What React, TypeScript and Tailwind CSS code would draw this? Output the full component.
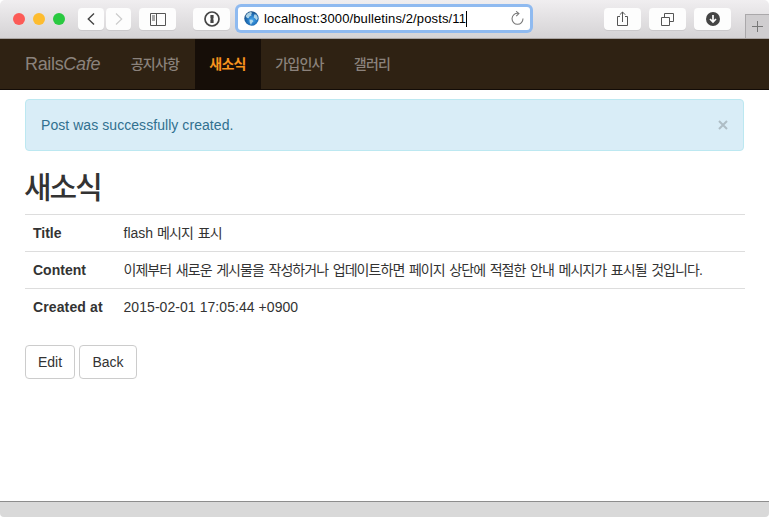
import type { ReactNode } from "react";

const navItems = [
  { label: "공지사항", active: false, width: "w-[79px]" },
  { label: "새소식", active: true, width: "w-[66px]" },
  { label: "가입인사", active: false, width: "w-[78px]" },
  { label: "갤러리", active: false, width: "w-[67px]" },
];

function ToolButton({ className, children }: { className: string; children: ReactNode }) {
  return (
    <button className={`flex h-[22px] items-center justify-center rounded-[4px] bg-[#fdfdfd] shadow-[0_1px_0_#cbc9cb] ${className}`}>
      {children}
    </button>
  );
}

function Globe() {
  return (
    <svg width="15" height="15" viewBox="0 0 15 15">
      <defs>
        <radialGradient id="sea" cx="0.55" cy="0.6" r="0.6">
          <stop offset="0" stopColor="#4aaaf0" />
          <stop offset="0.6" stopColor="#2273bd" />
          <stop offset="1" stopColor="#1a4c80" />
        </radialGradient>
      </defs>
      <circle cx="7.5" cy="7.5" r="7.2" fill="url(#sea)" />
      <path d="M1.5 5 3.6 2.2 6.5 1l1.7.8-1 1.4.3 1.4-2 1L4.6 7.2 3 7zM5.4 8.4l2.8.4 1.2 1.5-1.6 1.6-.8 2-1.2-2.2zM10.2 3.4l2 .2 1.3 2.2.2 2-1.2 1.5-1.3-1.8-1.5-.9z" fill="#c5e4ef" opacity=".85" />
    </svg>
  );
}

function Toolbar() {
  return (
    <header className="relative flex h-[39px] items-start rounded-t-[5px] border-b border-[#aaa5a3] bg-gradient-to-b from-[#f0eef0] to-[#d5d3d5] pt-2 pl-[13px]">
      <div className="mt-[5px] flex gap-2">
        <span className="size-3 rounded-full bg-[#fc5b57]" />
        <span className="size-3 rounded-full bg-[#fdbc2f]" />
        <span className="size-3 rounded-full bg-[#29c940]" />
      </div>
      <div className="ml-[13px] flex gap-[2px]">
        <ToolButton className="w-[26px]">
          <svg width="10" height="14" viewBox="0 0 10 14" fill="none" stroke="#444" strokeWidth="1.4"><path d="M8 1.5 2.3 7 8 12.5" /></svg>
        </ToolButton>
        <ToolButton className="w-[25px]">
          <svg width="10" height="14" viewBox="0 0 10 14" fill="none" stroke="#ccc" strokeWidth="1.2"><path d="m2 1.5 5.7 5.5L2 12.5" /></svg>
        </ToolButton>
      </div>
      <ToolButton className="ml-2 w-[37px]">
        <svg width="16" height="13" viewBox="0 0 16 13" fill="none" stroke="#555" strokeWidth="1"><path d="M.5.5h15v12H.5zM6.5.5v12M2 3h3M2 5h3M2 7h3" /></svg>
      </ToolButton>
      <ToolButton className="ml-[17px] w-[37px]">
        <svg width="16" height="16" viewBox="0 0 16 16"><circle cx="8" cy="8" r="7" fill="none" stroke="#454545" strokeWidth="1.7" /><path d="M6.4 4h3.2v3.2L9 8l.6.7V12H6.4V8.8L7 8l-.6-.8z" fill="#454545" /></svg>
      </ToolButton>
      <div className="-mt-px ml-[8px] flex h-[23px] w-[292px] items-center rounded-[3px] bg-white pl-[6px] shadow-[0_0_0_3px_#8fbaf0]">
        <Globe />
        <span className="ml-[5px] w-[202px] pt-px text-[13px] leading-5 tracking-[0.12px] whitespace-nowrap text-black">localhost:3000/bulletins/2/posts/11</span>
        <span className="h-4 w-px bg-black" />
        <svg className="mr-[5px] ml-auto" width="15" height="15" viewBox="0 0 14 14" fill="none" stroke="#777"><path d="M7.5 2.2A5.1 5.1 0 1 0 12.1 7M5.7.3 8.3 2.4 5.8 4.7" /></svg>
      </div>
      <ToolButton className="ml-[74px] w-[37px]">
        <svg width="13" height="16" viewBox="0 0 13 16" fill="none" stroke="#555"><path d="M4 5.5H1.5v9h10v-9H9M6.5 11V1M3.8 3.7 6.5 1l2.7 2.7" /></svg>
      </ToolButton>
      <ToolButton className="ml-2 w-[37px]">
        <svg width="13" height="13" viewBox="0 0 13 13" fill="none" stroke="#555"><path d="M.5 4.5h8v8h-8zM3.5 4V.5h9v8H9" /></svg>
      </ToolButton>
      <ToolButton className="ml-2 w-[37px]">
        <svg width="14" height="14" viewBox="0 0 14 14"><circle cx="7" cy="7" r="7" fill="#454545" /><path d="M7 3v7M4 7l3 3 3-3" fill="none" stroke="white" strokeWidth="1.7" /></svg>
      </ToolButton>
      <div className="mt-[6px] ml-[14px] flex h-[24px] w-6 items-center justify-center border-t border-l border-[#aaa8aa] bg-[#cfcdcf]">
        <svg width="11" height="11" viewBox="0 0 11 11" stroke="#777"><path d="M0 5.5h11M5.5 0v11" /></svg>
      </div>
    </header>
  );
}

export default function App() {
  return (
    <div className="flex h-[517px] w-[769px] flex-col overflow-hidden bg-white font-['Liberation_Sans','Noto_Sans_CJK_KR',sans-serif] text-[14px] leading-5 text-[#333]">
      <Toolbar />
      <nav className="flex h-[51px] shrink-0 border-b border-[#130c07] bg-[#2f2213] pl-[25px] text-[#8b827c]">
        <a className="w-[91px] pt-[15px] text-[18px] leading-5 tracking-[-0.33px]">Rails<em>Cafe</em></a>
        {navItems.map((item) => (
          <a
            key={item.label}
            className={`flex shrink-0 justify-center pt-[15px] pr-px tracking-[-0.75px] ${item.width} ${item.active ? "bg-[#160e08] font-bold text-[#f7931e]" : "font-medium"}`}
          >
            {item.label}
          </a>
        ))}
      </nav>
      <main className="flex-1 pt-[9px] pr-6 pl-[25px]">
        <div className="flex h-[52px] w-[719px] items-center justify-between rounded-[4px] border border-[#bce8f1] bg-[#d9edf7] pr-[14px] pl-[15px] text-[#31708f]">
          <span className="tracking-[0.06px]">Post was successfully created.</span>
          <svg width="12" height="12" viewBox="0 0 12 12" stroke="#aebdc5" strokeWidth="2"><path d="m2 2 8 8M10 2l-8 8" /></svg>
        </div>
        <h1 className="-ml-px mt-[20px] h-[43px] text-[30px] leading-[33px] font-medium tracking-[-2px]">새소식</h1>
        <table className="w-[720px] table-fixed border-collapse text-left">
          <colgroup>
            <col className="w-[91px]" />
            <col />
          </colgroup>
          <tbody>
            <tr className="h-[37px] border-t border-[#ddd]">
              <th className="pl-2">Title</th>
              <td className="pl-[7.5px]">flash <span className="tracking-[-0.9px] [word-spacing:1.8px]">메시지 표시</span></td>
            </tr>
            <tr className="h-[37px] border-t border-[#ddd]">
              <th className="pl-2">Content</th>
              <td className="pl-[7.5px] tracking-[-0.95px] whitespace-nowrap [word-spacing:1.65px]">이제부터 새로운 게시물을 작성하거나 업데이트하면 페이지 상단에 적절한 안내 메시지가 표시될 것입니다.</td>
            </tr>
            <tr className="h-[37px] border-t border-[#ddd]">
              <th className="pl-2 tracking-[0.12px] whitespace-nowrap">Created at</th>
              <td className="pl-[7.5px] tracking-[0.06px]">2015-02-01 17:05:44 +0900</td>
            </tr>
          </tbody>
        </table>
        <div className="mt-[19px] flex gap-1">
          <button className="h-[34px] w-[50px] rounded-[4px] border border-[#ccc]">Edit</button>
          <button className="h-[34px] w-[58px] rounded-[4px] border border-[#ccc]">Back</button>
        </div>
      </main>
      <footer className="h-4 shrink-0 rounded-b-[4px] border-t border-[#8d8d8d] bg-[#d9d9d9]" />
    </div>
  );
}
